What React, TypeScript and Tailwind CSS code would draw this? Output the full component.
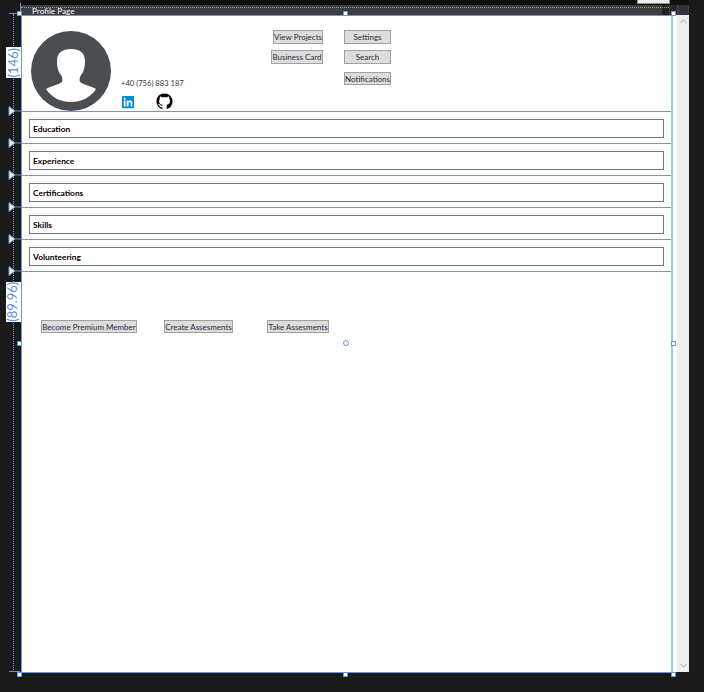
import { FaGithub, FaLinkedin } from "react-icons/fa";

const font = "font-['Lato','Open_Sans',sans-serif]";

const sections = ["Education", "Experience", "Certifications", "Skills", "Volunteering"];

function DesignButton({ label, className }: { label: string; className: string }) {
  return (
    <button className={`bg-[#dddddd] border border-[#a0a0a0] text-[8px] leading-none text-[#262b38] whitespace-nowrap flex items-center justify-center ${className}`}>
      {label}
    </button>
  );
}

function Avatar() {
  return (
    <svg width="80" height="80" viewBox="0 0 80 80" className="block">
      <defs>
        <clipPath id="round">
          <circle cx="40" cy="40" r="40" />
        </clipPath>
      </defs>
      <circle cx="40" cy="40" r="40" fill="#4b4e50" />
      <g clipPath="url(#round)">
        <path
          d="M15 58 C20 55 27 54 31 51 C32 48 31 46 30 44 C27 41 26 35 26 30 C26 22 31 18 40 18 C49 18 54 22 54 30 C54 35 53 41 50 44 C49 46 48 48 49 51 C53 54 60 55 65 58 C59 67 50 71 40 71 C30 71 21 67 15 58 Z"
          fill="#ffffff"
        />
      </g>
    </svg>
  );
}

function SectionRow({ label }: { label: string }) {
  return (
    <div className="h-[32px] border-b border-[#6f94d6] pl-[8px] pr-[7px] pt-[7px]">
      <div className="h-[19px] border border-[#777777] flex items-center pl-[3px] pt-[1px] text-[8.4px] font-bold text-black">
        {label}
      </div>
    </div>
  );
}

export default function App() {
  return (
    <div className={`relative w-[704px] h-[692px] bg-[#1a1a1a] overflow-hidden ${font}`}>
      <div className="h-[5px] ml-[21px] w-[668px] bg-[#101010]" />
      <div className="ml-[21px] w-[668px]">
        {/* title bar */}
        <div className="h-[10px] bg-[#3d3d3d] pl-[11px] flex justify-between text-[8.2px] leading-[12px] text-white">
          <span>Profile Page</span>
          <div className="flex">
            <div className="w-[7px] h-[10px] bg-[#222222]" />
            <div className="w-[7px] h-[10px] ml-[1px] bg-[#2a2a2a]" />
            <div className="w-[9px] h-[10px] ml-[2px] mr-[1px] bg-[#333333]" />
          </div>
        </div>

        <div className="flex h-[657px]">
          <div className="w-[656px] bg-white">
            <div className="w-[650px]">
              {/* header */}
              <div className="h-[97px] border-b border-[#6f94d6] flex">
                <div className="ml-[10px] mt-[16px]">
                  <Avatar />
                </div>
                <div className="ml-[10px] mt-[62px] w-[150px]">
                  <div className="text-[7.6px] leading-[12px] text-[#333333]">+40 (756) 883 187</div>
                  <div className="flex items-center mt-[4px]">
                    <FaLinkedin className="text-[#0288d1]" size={14} />
                    <FaGithub className="ml-[21px] text-black" size={17} stroke="#ffffff" strokeWidth={14} />
                  </div>
                </div>
                <div className="w-[52px] mt-[15px] flex flex-col items-end gap-[6px]">
                  <DesignButton label="View Projects" className="h-[14px] w-[50px]" />
                  <DesignButton label="Business Card" className="h-[14px] w-[52px]" />
                </div>
                <div className="ml-[21px] mt-[15px] flex flex-col">
                  <DesignButton label="Settings" className="h-[14px] w-[47px]" />
                  <DesignButton label="Search" className="h-[14px] w-[47px] mt-[6px]" />
                  <DesignButton label="Notifications" className="h-[13px] w-[47px] mt-[8px]" />
                </div>
              </div>

              {sections.map((s) => (
                <SectionRow key={s} label={s} />
              ))}

              {/* bottom buttons */}
              <div className="flex pl-[20px] pt-[48px]">
                <DesignButton label="Become Premium Member" className="h-[13px] w-[96px]" />
                <DesignButton label="Create Assesments" className="h-[13px] w-[69px] ml-[27px]" />
                <DesignButton label="Take Assesments" className="h-[13px] w-[62px] ml-[34px]" />
              </div>
            </div>
          </div>

          {/* scrollbar */}
          <div className="w-[12px] bg-[#eeeeee] flex flex-col items-center justify-between py-[4px] text-[#c4c4c4]">
            <svg width="7" height="5" viewBox="0 0 7 5"><path d="M0.5 4 L3.5 1 L6.5 4" fill="none" stroke="currentColor" strokeWidth="1.4" /></svg>
            <svg width="7" height="5" viewBox="0 0 7 5"><path d="M0.5 1 L3.5 4 L6.5 1" fill="none" stroke="currentColor" strokeWidth="1.4" /></svg>
          </div>
        </div>
      </div>

      {/* designer adorners */}
      <div className="absolute left-[637px] top-0 w-[33px] h-[4px] bg-[#e8edf8] border-x border-b border-[#6f94d6]" />
      <div className="absolute left-[21px] w-[648px] top-[7px] border-t border-dotted border-[#7f9fdc]" />
      <div className="absolute left-[20px] top-[3px] h-[12px] w-[1px] bg-[#6f94d6]" />
      <div className="absolute left-[21px] top-[15px] w-[652px] h-[658px] border border-[#6f94d6] border-r-2 border-r-[#a9c1ee] pointer-events-none" />
      <div className="absolute left-[13px] top-[14px] h-[656px] border-l border-dotted border-[#7f9fdc]" />
      <div className="absolute left-[9px] top-[13px] w-[11px] h-[1px] bg-[#6f94d6]" />
      <div className="absolute left-[9px] top-[671px] w-[11px] h-[1px] bg-[#6f94d6]" />

      <div className="absolute left-[6px] top-[47px] w-[15px] h-[31px] bg-white flex items-center justify-center">
        <span className="-rotate-90 whitespace-nowrap text-[13px] text-[#5f8fe0]">(146)</span>
      </div>
      <div className="absolute left-[6px] top-[282px] w-[15px] h-[40px] bg-white flex items-center justify-center">
        <span className="-rotate-90 whitespace-nowrap text-[13px] text-[#5f8fe0]">(89.96)</span>
      </div>

      {[111, 143, 175, 207, 239, 271].map((y) => (
        <svg key={y} width="13" height="10" viewBox="0 0 13 10" className="absolute left-[8px]" style={{ top: y - 5 }}>
          <path d="M1 0.5 L7 5 L1 9.5 Z" fill="#e8f0ff" stroke="#6f94d6" />
          <path d="M7 5 H13" stroke="#6f94d6" />
        </svg>
      ))}

      {/* resize handles */}
      {[
        [19, 13], [345, 13], [673, 13],
        [19, 343], [673, 343],
        [19, 674], [345, 674], [673, 674],
      ].map(([x, y]) => (
        <div key={`${x}-${y}`} className="absolute w-[5px] h-[5px] bg-white border border-[#6f94d6]" style={{ left: x - 2, top: y - 2 }} />
      ))}
      <div className="absolute left-[343px] top-[340px] w-[6px] h-[6px] rounded-full bg-white border border-[#6f94d6]" />
    </div>
  );
}
